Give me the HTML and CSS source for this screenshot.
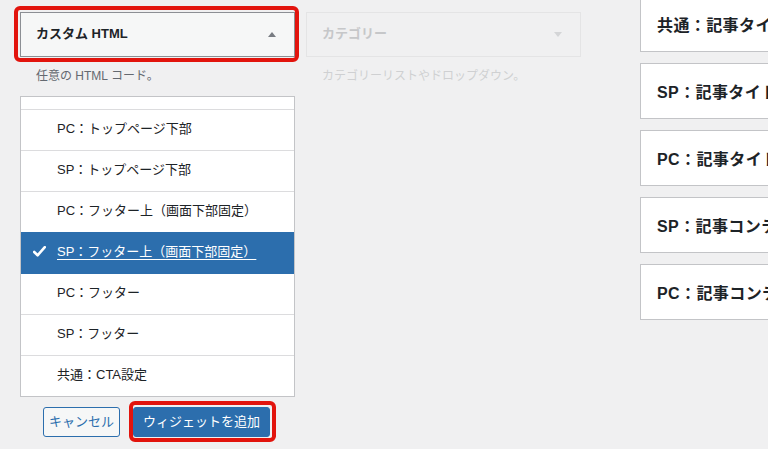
FILE: index.html
```html
<!DOCTYPE html>
<html lang="ja">
<head>
<meta charset="utf-8">
<title>ウィジェット</title>
<link rel="stylesheet" href="styles.css">
</head>
<body>
<div class="page">
  <div class="chooser">
    <div class="col col-active">
      <div class="widget widget-open">
        <span class="widget-title">カスタム HTML</span>
        <svg class="arrow" width="8" height="5" viewBox="0 0 8 5"><path d="M0 5 L4 0 L8 5 Z" fill="#787c82"/></svg>
      </div>
      <p class="desc">任意の HTML コード。</p>
      <ul class="sidebars">
        <li class="row row-partial"></li>
        <li class="row">PC：トップページ下部</li>
        <li class="row">SP：トップページ下部</li>
        <li class="row">PC：フッター上（画面下部固定）</li>
        <li class="row row-selected">
          <svg class="check" width="13" height="11" viewBox="0 0 13 11"><path d="M1.2 6 L4.6 9.3 L11.8 1.2" fill="none" stroke="#fff" stroke-width="2.6" stroke-linecap="round" stroke-linejoin="round"/></svg>
          <span class="sel-text">SP：フッター上（画面下部固定）</span>
        </li>
        <li class="row">PC：フッター</li>
        <li class="row">SP：フッター</li>
        <li class="row row-last">共通：CTA設定</li>
      </ul>
      <div class="actions">
        <button class="btn btn-cancel">キャンセル</button>
        <button class="btn btn-primary">ウィジェットを追加</button>
      </div>
    </div>
    <div class="col col-dim">
      <div class="widget widget-dim">
        <span class="widget-title">カテゴリー</span>
        <svg class="arrow" width="8" height="5" viewBox="0 0 8 5"><path d="M0 0 L8 0 L4 5 Z" fill="#d4d5d7"/></svg>
      </div>
      <p class="desc desc-dim">カテゴリーリストやドロップダウン。</p>
    </div>
  </div>
  <div class="areas">
    <div class="area">共通：記事タイトル下</div>
    <div class="area">SP：記事タイトル下</div>
    <div class="area">PC：記事タイトル下</div>
    <div class="area">SP：記事コンテンツ上</div>
    <div class="area">PC：記事コンテンツ上</div>
  </div>
</div>
</body>
</html>
```
FILE: styles.css
```css
* { box-sizing: border-box; }
html, body { margin: 0; padding: 0; }
body {
  background: #f0f0f1;
  font-family: "Liberation Sans", "Noto Sans CJK JP", sans-serif;
  color: #1d2327;
  width: 768px;
  height: 449px;
  overflow: hidden;
}
.page {
  display: flex;
  align-items: flex-start;
}
.chooser {
  display: flex;
  gap: 11px;
  padding: 12px 0 0 20px;
  width: 582px;
  flex: none;
}
.col { width: 275px; flex: none; }
.widget {
  height: 45px;
  border: 1px solid #c3c4c7;
  background: #f6f7f7;
  display: flex;
  align-items: center;
  justify-content: space-between;
  padding: 0 18px 1px 15px;
}
.widget-open {
  position: relative;
  border-color: #8c8f94;
}
.widget-open::after {
  content: "";
  position: absolute;
  top: -7px; left: -7px; right: -5px; bottom: -6px;
  border: 4px solid #e2140d;
  border-radius: 6px;
}
.widget-title {
  font-size: 13px;
  font-weight: bold;
  line-height: 16px;
}
.arrow { display: block; }
.widget-dim {
  border-color: #e4e4e5;
  background: #f0f0f1;
}
.widget-dim .widget-title { color: #c6c7c9; }
.desc {
  margin: 0;
  padding: 7px 0 0 16px;
  height: 39px;
  font-size: 12px;
  color: #646970;
  line-height: 24px;
}
.desc-dim { color: #cfd0d2; }
.sidebars {
  list-style: none;
  margin: 0;
  padding: 0;
  background: #fff;
  border: 1px solid #c3c4c7;
  height: 301px;
  overflow: hidden;
}
.row {
  height: 41px;
  border-bottom: 1px solid #dcdcde;
  display: flex;
  align-items: center;
  padding: 0 0 3px 36px;
  font-size: 13px;
  line-height: 16px;
  color: #1d2327;
}
.row-partial { height: 13px; padding: 0; }
.row-last { border-bottom: none; height: 40px; }
.row-selected {
  position: relative;
  background: #2c6ead;
  border-bottom-color: #2c6ead;
  box-shadow: 0 -1px 0 #2c6ead;
  color: #fff;
  padding-left: 12px;
}
.check { margin-right: 11px; display: block; }
.sel-text {
  text-decoration: underline;
  text-underline-offset: 3px;
}
.actions {
  display: flex;
  gap: 13px;
  padding: 10px 0 0 23px;
}
.btn {
  height: 30px;
  font-family: inherit;
  font-size: 13px;
  border-radius: 3px;
  padding: 0 5px 1px;
  line-height: 27px;
}
.btn-cancel {
  background: #f6f7f7;
  border: 1px solid #2c6ead;
  color: #2c6ead;
}
.btn-primary {
  position: relative;
  background: #2c6ead;
  border: 1px solid #2c6ead;
  color: #fff;
  padding: 0 9px 1px;
}
.btn-primary::after {
  content: "";
  position: absolute;
  top: -7px; left: -5px; right: -7px; bottom: -6px;
  border: 4px solid #e2140d;
  border-radius: 6px;
}
.areas {
  margin-left: 58px;
  margin-top: -4px;
  display: flex;
  flex-direction: column;
  gap: 11px;
  flex: none;
  width: 300px;
}
.area {
  height: 56px;
  background: #fff;
  border: 1px solid #c3c4c7;
  display: flex;
  align-items: center;
  padding: 0 0 1px 16px;
  font-size: 16px;
  font-weight: bold;
  letter-spacing: 0.4px;
  white-space: nowrap;
}
```
